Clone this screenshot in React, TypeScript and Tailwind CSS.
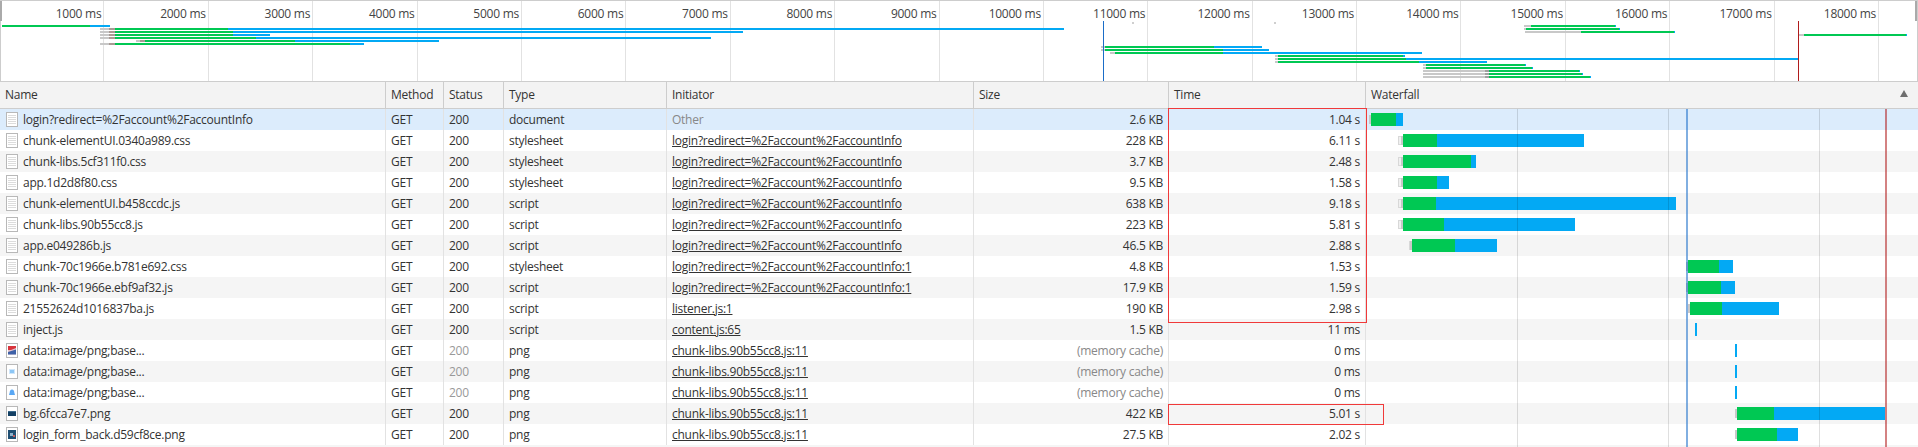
const GREEN = "#00c853";
const BLUE = "#03a9f4";

type Seg = [number, number, string];
type OBar = { y: number; segs: Seg[] };

const G = "#c8c8c8";
const B = "#a89a94";

const obars: OBar[] = [
  { y: 25, segs: [[2, 90, GREEN], [90, 110, BLUE]] },
  { y: 28, segs: [[100, 109, G], [109, 115, B], [115, 228, GREEN], [228, 1064, BLUE]] },
  { y: 31, segs: [[100, 109, G], [109, 115, B], [115, 233, GREEN], [233, 743, BLUE]] },
  { y: 34, segs: [[100, 109, G], [109, 115, B], [115, 233, GREEN], [233, 270, BLUE]] },
  { y: 37, segs: [[100, 109, G], [109, 115, B], [115, 256, GREEN], [256, 711, BLUE]] },
  { y: 40, segs: [[136, 140, G], [140, 145, B], [145, 295, GREEN], [295, 439, BLUE]] },
  { y: 43, segs: [[100, 109, G], [109, 115, B], [115, 350, GREEN], [350, 364, BLUE]] },
  { y: 46, segs: [[1101, 1105, G], [1105, 1214, GREEN], [1214, 1262, BLUE]] },
  { y: 49, segs: [[1101, 1105, G], [1105, 1223, GREEN], [1223, 1269, BLUE]] },
  { y: 52, segs: [[1110, 1115, G], [1115, 1223, GREEN], [1223, 1422, BLUE]] },
  { y: 55, segs: [[1275, 1278, G], [1278, 1403, GREEN], [1403, 1405, BLUE]] },
  { y: 58, segs: [[1275, 1278, G], [1278, 1406, GREEN], [1406, 1798, BLUE]] },
  { y: 61, segs: [[1275, 1278, G], [1278, 1419, GREEN], [1419, 1487, BLUE]] },
  { y: 64, segs: [[1423, 1426, G], [1426, 1525, GREEN], [1525, 1526, BLUE]] },
  { y: 67, segs: [[1423, 1426, G], [1426, 1532, GREEN], [1532, 1533, BLUE]] },
  { y: 70, segs: [[1423, 1485, G], [1485, 1489, "#a0a0a0"], [1489, 1579, GREEN], [1579, 1580, BLUE]] },
  { y: 73, segs: [[1423, 1485, G], [1485, 1489, "#a0a0a0"], [1489, 1582, GREEN], [1582, 1583, BLUE]] },
  { y: 76, segs: [[1423, 1485, G], [1485, 1489, "#a0a0a0"], [1489, 1590, GREEN], [1590, 1591, BLUE]] },
  { y: 25, segs: [[1524, 1531, G], [1531, 1615, GREEN], [1615, 1616, BLUE]] },
  { y: 28, segs: [[1524, 1526, G], [1526, 1619, GREEN], [1619, 1620, BLUE]] },
  { y: 31, segs: [[1525, 1581, G], [1581, 1674, GREEN], [1674, 1675, BLUE]] },
  { y: 34, segs: [[1798, 1804, G], [1804, 1906, GREEN], [1906, 1907, BLUE]] },
];

const labels = [
  "1000 ms", "2000 ms", "3000 ms", "4000 ms", "5000 ms", "6000 ms", "7000 ms", "8000 ms", "9000 ms",
  "10000 ms", "11000 ms", "12000 ms", "13000 ms", "14000 ms", "15000 ms", "16000 ms", "17000 ms", "18000 ms",
];

type Row = {
  name: string;
  icon: "doc" | "red" | "lblue" | "dot" | "bg" | "form";
  type: string;
  init: string;
  initGray?: boolean;
  size: string;
  sizeGray?: boolean;
  statusGray?: boolean;
  time: string;
  wf: { ws?: number; a: number; b?: number; c: number };
};

const L = "login?redirect=%2Faccount%2FaccountInfo";
const CL = "chunk-libs.90b55cc8.js:11";

const rows: Row[] = [
  { name: L, icon: "doc", type: "document", init: "Other", initGray: true, size: "2.6 KB", time: "1.04 s", wf: { ws: 1369, a: 1371, b: 1396, c: 1403 } },
  { name: "chunk-elementUI.0340a989.css", icon: "doc", type: "stylesheet", init: L, size: "228 KB", time: "6.11 s", wf: { ws: 1398, a: 1403, b: 1437, c: 1584 } },
  { name: "chunk-libs.5cf311f0.css", icon: "doc", type: "stylesheet", init: L, size: "3.7 KB", time: "2.48 s", wf: { ws: 1398, a: 1403, b: 1471, c: 1476 } },
  { name: "app.1d2d8f80.css", icon: "doc", type: "stylesheet", init: L, size: "9.5 KB", time: "1.58 s", wf: { ws: 1398, a: 1403, b: 1437, c: 1449 } },
  { name: "chunk-elementUI.b458ccdc.js", icon: "doc", type: "script", init: L, size: "638 KB", time: "9.18 s", wf: { ws: 1398, a: 1403, b: 1436, c: 1676 } },
  { name: "chunk-libs.90b55cc8.js", icon: "doc", type: "script", init: L, size: "223 KB", time: "5.81 s", wf: { ws: 1398, a: 1403, b: 1444, c: 1575 } },
  { name: "app.e049286b.js", icon: "doc", type: "script", init: L, size: "46.5 KB", time: "2.88 s", wf: { ws: 1409, a: 1412, b: 1455, c: 1497 } },
  { name: "chunk-70c1966e.b781e692.css", icon: "doc", type: "stylesheet", init: L + ":1", size: "4.8 KB", time: "1.53 s", wf: { ws: 1686, a: 1688, b: 1719, c: 1733 } },
  { name: "chunk-70c1966e.ebf9af32.js", icon: "doc", type: "script", init: L + ":1", size: "17.9 KB", time: "1.59 s", wf: { ws: 1686, a: 1688, b: 1721, c: 1735 } },
  { name: "21552624d1016837ba.js", icon: "doc", type: "script", init: "listener.js:1", size: "190 KB", time: "2.98 s", wf: { ws: 1688, a: 1690, b: 1722, c: 1779 } },
  { name: "inject.js", icon: "doc", type: "script", init: "content.js:65", size: "1.5 KB", time: "11 ms", wf: { a: 1695, c: 1697 } },
  { name: "data:image/png;base...", icon: "red", type: "png", init: CL, size: "(memory cache)", sizeGray: true, statusGray: true, time: "0 ms", wf: { a: 1735, c: 1737 } },
  { name: "data:image/png;base...", icon: "lblue", type: "png", init: CL, size: "(memory cache)", sizeGray: true, statusGray: true, time: "0 ms", wf: { a: 1735, c: 1737 } },
  { name: "data:image/png;base...", icon: "dot", type: "png", init: CL, size: "(memory cache)", sizeGray: true, statusGray: true, time: "0 ms", wf: { a: 1735, c: 1737 } },
  { name: "bg.6fcca7e7.png", icon: "bg", type: "png", init: CL, size: "422 KB", time: "5.01 s", wf: { ws: 1735, a: 1737, b: 1774, c: 1885 } },
  { name: "login_form_back.d59cf8ce.png", icon: "form", type: "png", init: CL, size: "27.5 KB", time: "2.02 s", wf: { ws: 1735, a: 1737, b: 1777, c: 1798 } },
];

const WF_X = 1366;

function FileIcon({ kind }: { kind: Row["icon"] }) {
  return (
    <svg width="12" height="15" viewBox="0 0 12 15" className="shrink-0">
      <rect x="0.5" y="0.5" width="11" height="14" fill="#fff" stroke="#b8b8b8" />
      {kind === "doc" &&
        [3, 5, 7, 9, 11].map((y) => <rect key={y} x="2" y={y} width="8" height="1" fill="#dcdcdc" />)}
      {kind === "red" && (
        <>
          <rect x="2" y="3" width="8" height="8.5" fill="#e6c4cc" />
          <path d="M2 3H10V5L5 7H2Z" fill="#d8343c" />
          <path d="M2 9L10 6.5V11.5H2Z" fill="#3f62a8" />
        </>
      )}
      {kind === "lblue" && (
        <>
          <rect x="3" y="5" width="6" height="5" fill="#cfe6fa" />
          <rect x="4" y="6" width="4" height="3" fill="#8cc6f5" />
        </>
      )}
      {kind === "dot" && <path d="M6 4.5C7.6 4.5 8.3 6 8.3 7.5L9 10H3L3.7 7.5C3.7 6 4.4 4.5 6 4.5Z" fill="#5aa8f5" />}
      {kind === "bg" && (
        <>
          <rect x="2" y="5" width="8" height="5" fill="#123f63" />
          <rect x="2" y="5" width="8" height="1" fill="#3c6a8c" />
        </>
      )}
      {kind === "form" && (
        <>
          <rect x="2" y="3" width="8" height="9" fill="#1f4e72" />
          <rect x="4" y="6" width="3" height="3" fill="#8fb2cc" />
          <rect x="7" y="8" width="2" height="2" fill="#c25a5a" />
        </>
      )}
    </svg>
  );
}

function Waterfall({ wf }: { wf: Row["wf"] }) {
  const { ws, a, b, c } = wf;
  return (
    <>
      {ws !== undefined && (
        <>
          <div className="absolute top-[6px] h-[9px] border border-[#d8d8d8] bg-[#f0f0f0]" style={{ left: ws - WF_X, width: a - ws }} />
          <div className="absolute top-[6px] h-[9px] w-[2px] bg-[#c8c8c8]" style={{ left: a - 2 - WF_X }} />
        </>
      )}
      {b !== undefined && (
        <div className="absolute top-[4px] h-[13px] bg-[#00c853]" style={{ left: a - WF_X, width: b - a }} />
      )}
      <div
        className="absolute top-[4px] h-[13px] bg-[#03a9f4]"
        style={{ left: (b ?? a) - WF_X, width: c - (b ?? a) }}
      />
    </>
  );
}

const cell = "flex items-center px-[5px] overflow-hidden whitespace-nowrap border-r border-[#e2e2e2]";
const head = "flex items-center px-[5px] overflow-hidden whitespace-nowrap border-r border-[#cdcdcd]";
const cols = "grid grid-cols-[386px_58px_60px_163px_307px_195px_197px_552px]";

export default function App() {
  return (
    <div className="relative w-[1918px] h-[447px] overflow-hidden bg-white text-[12px] leading-[16px] tracking-[-0.25px] text-[#333] font-['Open_Sans','Noto_Sans',sans-serif]">
      {/* Overview */}
      <div className="relative h-[82px] border-y border-x border-[#cdcdcd]">
        <div className="flex h-full -ml-px">
          {labels.map((l) => (
            <div key={l} className="w-[104.4px] shrink-0 h-full border-r border-[#e2e2e2] pt-[5px] pr-[2px] text-right text-[#444]">
              {l}
            </div>
          ))}
        </div>
        <svg className="absolute left-[-1px] top-[-1px]" width="1918" height="82" viewBox="0 0 1918 82">
          {obars.map((bar, i) =>
            bar.segs.map((s, j) => (
              <rect key={`${i}-${j}`} x={s[0]} y={bar.y} width={s[1] - s[0]} height="2" fill={s[2]} />
            )),
          )}
          <rect x="1132" y="22" width="2" height="2" fill="#cfcfcf" />
          <rect x="1274" y="22" width="2" height="2" fill="#cfcfcf" />
          <rect x="1103" y="21" width="1" height="60" fill="#1a6dc8" />
          <rect x="1798" y="21" width="1" height="60" fill="#b01c1c" />
          <rect x="0" y="1" width="2" height="20" fill="#aaa" />
          <rect x="1915" y="1" width="2" height="20" fill="#aaa" />
        </svg>
      </div>

      {/* Header */}
      <div className={`${cols} h-[27px] bg-[#f3f3f3] border-b border-[#cdcdcd]`}>
        <div className={head}>Name</div>
        <div className={head}>Method</div>
        <div className={head}>Status</div>
        <div className={head}>Type</div>
        <div className={head}>Initiator</div>
        <div className={head}>Size</div>
        <div className={head}>Time</div>
        <div className="relative flex items-center px-[5px]">
          Waterfall
          <svg className="absolute right-[10px] top-[8px]" width="8" height="7" viewBox="0 0 8 7">
            <path d="M4 0L8 7H0Z" fill="#6e6e6e" />
          </svg>
        </div>
      </div>

      {/* Rows */}
      <div className="relative">
        {rows.map((r, i) => (
          <div
            key={i}
            className={`${cols} h-[21px] ${i === 0 ? "bg-[#dcecfc]" : i % 2 === 0 ? "bg-[#f5f5f5]" : "bg-white"}`}
          >
            <div className={`${cell} pl-[6px] gap-[5px]`}>
              <FileIcon kind={r.icon} />
              <span>{r.name}</span>
            </div>
            <div className={cell}>GET</div>
            <div className={`${cell} ${r.statusGray ? "text-[#999]" : ""}`}>200</div>
            <div className={cell}>{r.type}</div>
            <div className={`${cell} ${r.initGray ? "text-[#888]" : "underline"}`}>{r.init}</div>
            <div className={`${cell} justify-end ${r.sizeGray ? "text-[#888]" : ""}`}>{r.size}</div>
            <div className={`${cell} justify-end`}>{r.time}</div>
            <div className="relative">
              <Waterfall wf={r.wf} />
            </div>
          </div>
        ))}
        <div className="h-[2px] bg-[#f5f5f5]" />

        {/* Waterfall grid lines over the bars */}
        <div className="absolute top-0 bottom-0 left-[1517px] w-px bg-[#00000020]" />
        <div className="absolute top-0 bottom-0 left-[1668px] w-px bg-[#00000020]" />
        <div className="absolute top-0 bottom-0 left-[1819px] w-px bg-[#00000020]" />
        <div className="absolute top-0 bottom-0 left-[1686px] w-[2px] bg-[#1a6dc8]/55" />
        <div className="absolute top-0 bottom-0 left-[1885px] w-[2px] bg-[#b01c1c]/55" />

        {/* Annotation boxes */}
        <div className="absolute left-[1168px] top-[-1px] w-[199px] h-[215px] border border-[#f03a3a]" />
        <div className="absolute left-[1168px] top-[295px] w-[216px] h-[21px] border border-[#f03a3a]" />
      </div>
    </div>
  );
}
